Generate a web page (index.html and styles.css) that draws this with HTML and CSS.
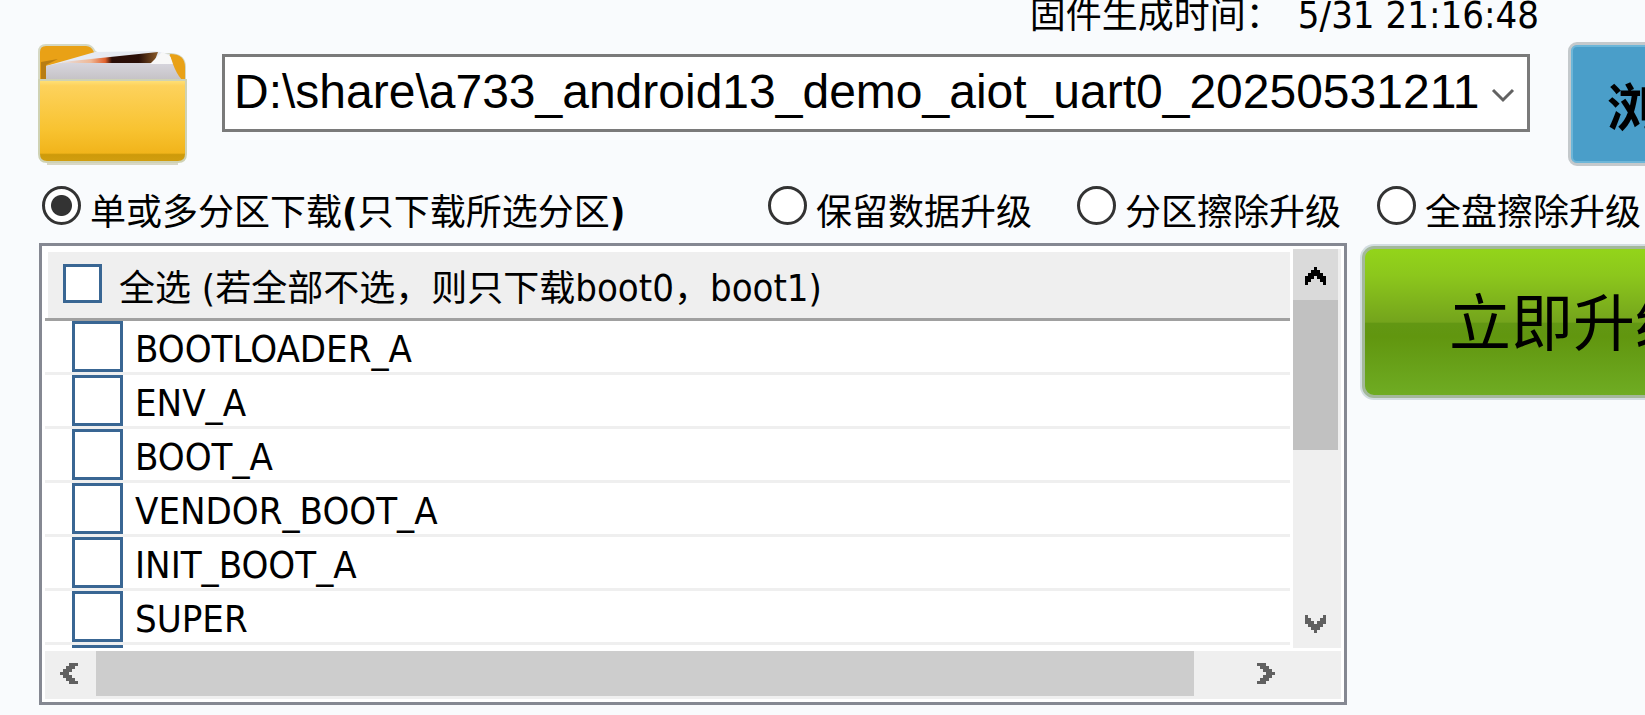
FILE: index.html
```html
<!DOCTYPE html>
<html lang="zh-CN">

<head>
    <meta charset="utf-8">
    <title>固件升级</title>
    <link rel="stylesheet" href="styles.css">
</head>

<body>
    <p class="build_time"><span>固件生成时间：</span><span class="latin">5/31 21:16:48</span></p>

    <div class="file_row">
        <svg class="folder" viewBox="0 0 152 124" aria-hidden="true">
            <defs>
                <linearGradient id="front" x1="0" y1="0" x2="0" y2="1">
                    <stop offset="0" stop-color="#ffe27a"/>
                    <stop offset="0.07" stop-color="#fdd25c"/>
                    <stop offset="0.6" stop-color="#f8c331"/>
                    <stop offset="0.89" stop-color="#f1b41b"/>
                    <stop offset="0.91" stop-color="#cd9a0a"/>
                    <stop offset="1" stop-color="#d29e10"/>
                </linearGradient>
                <linearGradient id="photo" x1="0" y1="0" x2="1" y2="0">
                    <stop offset="0" stop-color="#e6e0e0"/>
                    <stop offset="0.3" stop-color="#f0b896"/>
                    <stop offset="0.45" stop-color="#e0602c"/>
                    <stop offset="0.52" stop-color="#2a0d06"/>
                    <stop offset="0.8" stop-color="#2a0f08"/>
                    <stop offset="1" stop-color="#8a5a28"/>
                </linearGradient>
                <linearGradient id="paper" x1="0" y1="0" x2="0" y2="1">
                    <stop offset="0" stop-color="#dddce6"/>
                    <stop offset="1" stop-color="#c4c1c4"/>
                </linearGradient>
            </defs>
            <path d="M3 10q0-7 7-7h40q6 0 9 7l4 2h72q14 1 14 13v24H3z" fill="#e9a116" stroke="#d5d8c4" stroke-width="2"/>
            <path d="M59 10l60-1 14 3 12 27H10V24z" fill="#e6eaf2"/>
            <path d="M26 20l96-10-6 16-90 0z" fill="url(#photo)"/>
            <path d="M10 24l14-3 92 0 18-6 13 24H10z" fill="url(#paper)"/>
            <path d="M114 22l12-12 8 4 4 8z" fill="#f8f8f8"/>
            <path d="M5 38V20l17-3-12 6v15z" fill="#b87d12"/>
            <path d="M134 12q15 0 15 13v15q-4-2-8-9t-7-19z" fill="#e9a116"/>
            <path d="M3 38h147v74q0 8-8 8H11q-8 0-8-8z" fill="url(#front)" stroke="#cfd2b4" stroke-width="2"/>
            <path d="M11 122h131" stroke="#b9b48f" stroke-width="1"/>
        </svg>
        <div class="combo">
            <select class="combo_box" aria-label="固件">
                <option>D:\share\a733_android13_demo_aiot_uart0_20250531211</option>
            </select>
            <svg class="combo_arrow" viewBox="0 0 24 16" aria-hidden="true">
                <path d="M2 2l10 10L22 2" fill="none" stroke="#626262" stroke-width="3"/>
            </svg>
        </div>
        <button class="browse" type="button">浏览</button>
    </div>

    <div class="modes">
        <label class="mode"><input type="radio" name="mode" checked><span>单或多分区下载<b class="latin">(</b>只下载所选分区<b class="latin">)</b></span></label>
        <label class="mode"><input type="radio" name="mode"><span>保留数据升级</span></label>
        <label class="mode"><input type="radio" name="mode"><span>分区擦除升级</span></label>
        <label class="mode"><input type="radio" name="mode"><span>全盘擦除升级</span></label>
    </div>

    <div class="main_row">
        <div class="panel">
            <div class="list">
                <label class="list_head"><input type="checkbox"><span>全选<span class="latin"> (</span>若全部不选，则只下载<span class="latin">boot0</span>，<span class="latin">boot1)</span></span></label>
                <ul class="parts">
                    <li><label><input type="checkbox">BOOTLOADER_A</label></li>
                    <li><label><input type="checkbox">ENV_A</label></li>
                    <li><label><input type="checkbox">BOOT_A</label></li>
                    <li><label><input type="checkbox">VENDOR_BOOT_A</label></li>
                    <li><label><input type="checkbox">INIT_BOOT_A</label></li>
                    <li><label><input type="checkbox">SUPER</label></li>
                    <li><label><input type="checkbox" aria-label="more"></label></li>
                </ul>
            </div>
            <div class="vbar">
                <button class="arrow up" type="button" aria-label="up">
                    <svg viewBox="0 0 21 18"><path d="M9 0h3v3h3v3h3v3h3v9h-3v-3h-3v-3h-3v-3H9v3H6v3H3v3H0V9h3V6h3V3h3z"/></svg>
                </button>
                <div class="vthumb"></div>
                <button class="arrow down" type="button" aria-label="down">
                    <svg viewBox="0 0 21 18"><path d="M9 18h3v-3h3v-3h3V9h3V0h-3v3h-3v3h-3v3H9V6H6V3H3V0H0v9h3v3h3v3h3z"/></svg>
                </button>
            </div>
            <div class="hbar">
                <button class="arrow left" type="button" aria-label="left">
                    <svg viewBox="0 0 18 21"><path d="M0 9v3h3v3h3v3h3v3h9v-3h-3v-3h-3v-3H9V9h3V6h3V3h3V0H9v3H6v3H3v3z"/></svg>
                </button>
                <div class="hthumb"></div>
                <button class="arrow right" type="button" aria-label="right">
                    <svg viewBox="0 0 18 21"><path d="M18 9v3h-3v3h-3v3H9v3H0v-3h3v-3h3v-3h3V9H6V6H3V3H0V0h9v3h3v3h3v3z"/></svg>
                </button>
            </div>
        </div>
        <button class="upgrade" type="button">立即升级</button>
    </div>
</body>

</html>
```

FILE: styles.css
```css
* {
    box-sizing: border-box;
}

body {
    margin: 0;
    padding-left: 36px;
    overflow: hidden;
    background-color: #f9fbfd;
    color: black;
    font-family: "Liberation Sans", "Noto Sans CJK SC", sans-serif;
    font-size: 36px;
}

button,
input,
select {
    margin: 0;
    padding: 0;
    border: 0;
    border-radius: 0;
    appearance: none;
    flex: none;
}

.latin {
    font-family: "DejaVu Sans Condensed", "DejaVu Sans", sans-serif;
    font-size: 38px;
    white-space: pre;
}

.build_time {
    display: flex;
    justify-content: flex-end;
    align-items: baseline;
    gap: 16px;
    height: 42px;
    margin: 0;
    padding-right: 106px;
    line-height: 30px;
}

/* firmware file */
.file_row {
    display: flex;
    align-items: flex-start;
}

.folder {
    flex: none;
    width: 152px;
    height: 124px;
}

.combo {
    position: relative;
    flex: 1;
    margin: 12px 38px 0 34px;
}

.combo_box {
    display: block;
    width: 100%;
    height: 78px;
    padding: 0 48px 4px 9px;
    border: 3px solid #7a7a7a;
    background-color: white;
    color: black;
    font-family: "Liberation Sans", sans-serif;
    font-size: 48px;
}

.combo_arrow {
    position: absolute;
    right: 15px;
    top: 34px;
    width: 24px;
    height: 16px;
    pointer-events: none;
}

.browse {
    width: 180px;
    height: 124px;
    margin-right: -103px;
    padding-left: 36px;
    border: 3px solid #c4c9cc;
    border-radius: 9px;
    background-color: #4a9ec9;
    box-shadow: inset 0 0 0 2px #6db6d8;
    color: black;
    font-family: "Noto Sans CJK SC", sans-serif;
    font-size: 52px;
    font-weight: bold;
    text-align: left;
}

/* upgrade mode */
.modes {
    display: flex;
    height: 77px;
    padding: 20px 4px 0 6px;
}

.mode {
    display: flex;
    align-items: flex-start;
    gap: 9px;
    line-height: 54px;
    white-space: nowrap;
}

.mode:first-child {
    flex: 1;
}

.mode + .mode + .mode {
    margin-left: 45px;
}

.mode + .mode:last-child {
    margin-left: 36px;
}

.mode input {
    width: 39px;
    height: 39px;
    border: 3px solid #333;
    border-radius: 50%;
    background-color: white;
}

.mode input:checked {
    background-image: radial-gradient(circle, #333 10px, white 11px);
}

.mode .latin {
    line-height: 36px;
}

/* partition list */
.main_row {
    display: flex;
    align-items: flex-start;
    gap: 15px;
}

.panel {
    display: grid;
    grid-template-columns: 1fr 48px;
    flex: 1;
    margin-left: 3px;
    padding: 3px;
    border: 3px solid #858892;
    background-color: white;
}

.list {
    margin: 3px 3px 0 0;
}

.list_head {
    display: flex;
    align-items: flex-start;
    gap: 17px;
    height: 69px;
    padding: 12px 0 0 18px;
    border-bottom: 3px solid #a0a0a0;
    background-color: #efefef;
    box-shadow: inset 3px 0 0 white;
    line-height: 50px;
    white-space: nowrap;
}

.list_head input {
    width: 39px;
    height: 39px;
    border: 3px solid #396693;
    background-color: white;
}

.list_head .latin {
    line-height: 36px;
}

.parts {
    height: 327px;
    margin: 0;
    padding: 0;
    overflow: hidden;
    list-style: none;
    font-family: "DejaVu Sans Condensed", "DejaVu Sans", sans-serif;
    font-size: 38px;
    line-height: 57px;
}

.parts label {
    display: flex;
    align-items: flex-start;
    gap: 12px;
    height: 54px;
    padding-left: 27px;
    border-bottom: 3px solid #efefef;
}

.parts input {
    width: 51px;
    height: 51px;
    border: 3px solid #396693;
    background-color: white;
}

/* scroll bars */
.vbar {
    display: flex;
    flex-direction: column;
    background-color: #efefef;
}

.hbar {
    display: flex;
    grid-column: 1 / 3;
    height: 51px;
    padding-right: 51px;
    border-top: 3px solid white;
    background-color: #efefef;
}

.arrow {
    display: flex;
    align-items: center;
    justify-content: center;
    width: 45px;
    height: 51px;
    background-color: transparent;
    fill: #606060;
}

.arrow svg {
    flex: none;
    width: 21px;
    height: 18px;
}

.up {
    padding-top: 3px;
    background-color: #dadada;
    fill: black;
}

.down {
    margin-top: auto;
    padding-top: 3px;
}

.left,
.right {
    width: 51px;
    height: 45px;
}

.left {
    padding-right: 3px;
}

.right {
    padding-left: 3px;
}

.left svg,
.right svg {
    width: 18px;
    height: 21px;
}

.vthumb {
    width: 45px;
    height: 150px;
    background-color: #c1c1c1;
}

.hthumb {
    flex: 1;
    height: 45px;
    margin-right: 45px;
    background-color: #cdcdcd;
}

.upgrade {
    width: 420px;
    height: 152px;
    margin: 3px -137px 0 0;
    padding: 0 0 6px 84px;
    border: 3px solid #a3b89a;
    border-radius: 12px;
    background-image: linear-gradient(#93d41a, #8cc71c 18%, #74a41c 50%, #629713 51%, #61960f 60%, #6fac23);
    box-shadow: 0 0 0 2px #d3dde1;
    color: black;
    font-family: "Noto Sans CJK SC", sans-serif;
    font-size: 62px;
    text-align: left;
    white-space: nowrap;
}
```
